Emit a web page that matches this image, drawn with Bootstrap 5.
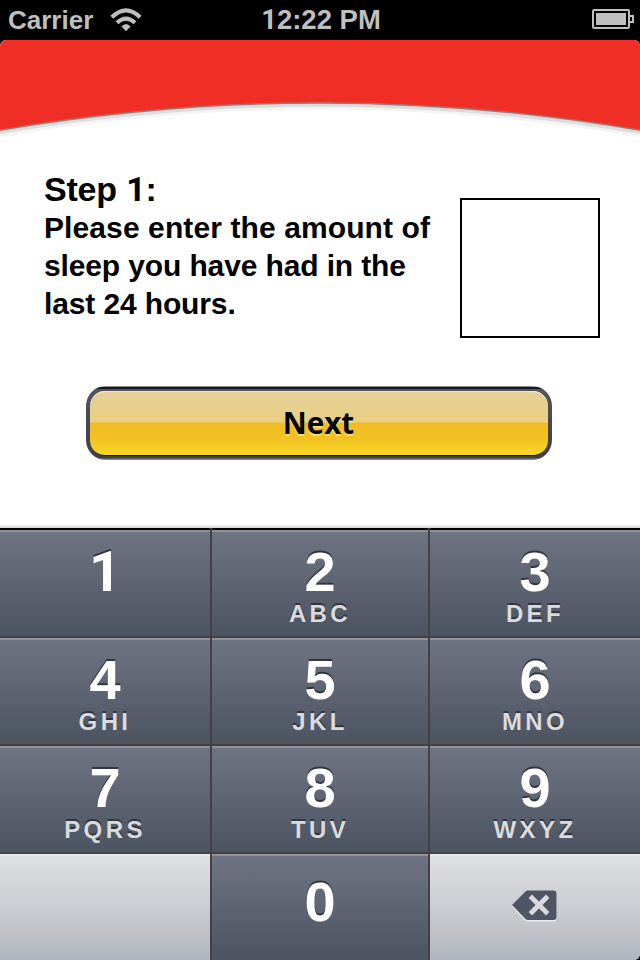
<!DOCTYPE html>
<html lang="en">
<head>
<meta charset="utf-8">
<meta name="viewport" content="width=device-width, initial-scale=1">
<title>Sleep calculator</title>
<link href="https://cdn.jsdelivr.net/npm/bootstrap@5.3.0/dist/css/bootstrap.min.css" rel="stylesheet">
<style>
body { font-family: "Liberation Sans", Arial, sans-serif; background: #000; }
.screen { width: 640px; height: 960px; }
.statusbar { height: 40px; color: #bfbfbf; font-size: 27.5px; line-height: 40px; display: grid; grid-template-columns: 1fr auto 1fr; padding: 0 6px 0 8px; }
.carrier { font-size: 26px; }
.wifi { margin-left: 17px; }
.plain-one { font-family: Roboto, sans-serif; line-height: 1; }
.content-area { height: 488px; border-radius: 6px 6px 0 0; }
.banner { height: 98px; }
.prompt { padding: 32px 40px 0 44px; height: 248px; }
.step-title { font-size: 34px; line-height: 39px; letter-spacing: -.2px; }
.step-text { font-size: 30px; line-height: 38px; letter-spacing: .1px; white-space: nowrap; }
.tight { letter-spacing: -.13px; }
.hours-box { width: 140px; height: 140px; margin-top: 28px; border: 2px solid #000; border-radius: 0; padding: 8px; font-size: 60px; text-align: center; }
.next-frame { width: 466px; height: 74px; margin-left: 86px; padding: 5px 4px 4px; border-radius: 20px; background: linear-gradient(#8c8c90 0 1px, #17191d 1px 3px, #50545c 3px 6px, #454850 50%, #3c4048 calc(100% - 2px), #88868a calc(100% - 1px)); }
.next-btn { border-radius: 15px; border: 0; border-bottom: 1px solid #151515; padding: 0 1px 1px 0; color: #000; font: bold 29.5px/60px "Open Sans", "Noto Sans", sans-serif; text-shadow: 0 1.5px 0 rgba(255,240,190,.6);
  background: linear-gradient(#f1e3bd 0, #e5cf98 2px, #eacf82 31px, #efbc22 32px, #f2c223 48px, #f9d925 100%); box-shadow: inset 0 1px 0 #f3e7ca; }
.next-btn:hover { color: #000; }
.pad-shade { height: 4px; background: linear-gradient(#fff, #d3d3d3); margin-top: auto; }
.keypad { height: 432px; display: grid; grid-template-columns: 212px 218px 210px; grid-template-rows: 110px 108px 108px 106px; }
.pad-key { border: 0 solid #424244; border-width: 0 2px 2px 0; padding: 0; color: #fff; background: linear-gradient(#8f93a0 0 2px, #6e7481 2px, #4d5461 100%) padding-box; text-shadow: 0 -2px 0 #303540; }
.pad-key:nth-child(3n) { border-right-width: 0; }
.pad-key:nth-child(n+10) { border-bottom-width: 0; }
.pad-key:nth-child(-n+3) { padding-top: 2px; background: linear-gradient(#000 0 2px, #8f8f9d 2px 4px, #6e7481 4px, #4d5461 100%) padding-box; }
.pad-key.pale { background: linear-gradient(#e8e9ea 0 2px, #dedfe3 2px, #c3c7cb 65%, #b1b5c0 100%) padding-box; }
.digit { font-size: 56px; line-height: 60px; height: 72px; padding-top: 12px; }
.letters { font-size: 24px; line-height: 24px; letter-spacing: 3.4px; color: #d9dbdd; }
.digit.zero { padding-top: 18px; }
</style>
</head>
<body>
<main class="screen d-flex flex-column overflow-hidden">
  <header class="statusbar align-items-center fw-bold">
    <div class="d-flex align-items-center">
      <span class="carrier">Carrier</span>
      <svg class="wifi" width="32" height="40" viewBox="110 0 32 40" fill="none" stroke="#bfbfbf">
        <path d="M111.900 17.300Q126 3.500 140.100 17.300" stroke-width="4.200"/>
        <path d="M117 22.700Q126 14.500 135 22.700" stroke-width="4"/>
        <path d="M121.400 26.600Q126 21.600 130.600 26.600L126 31.200Z" fill="#bfbfbf" stroke="none"/>
      </svg>
    </div>
    <span><span class="plain-one">1</span>2:22 PM</span>
    <svg class="ms-auto" width="42" height="40" viewBox="592 0 42 40">
      <rect x="593" y="10" width="36" height="18" rx="1.2" fill="none" stroke="#bfbfbf" stroke-width="2"/>
      <path d="M596 13h30v12h-30z" fill="#bfbfbf"/>
      <path d="M630 16h3v6h-3" fill="none" stroke="#bfbfbf" stroke-width="2"/>
    </svg>
  </header>
  <section class="content-area bg-white text-black d-flex flex-column overflow-hidden">
    <svg class="banner d-block flex-shrink-0" width="640" height="98" viewBox="0 40 640 98">
      <g fill="none">
        <path d="M0 134Q320 79 640 134" stroke="#f4f4f4" stroke-width="6"/>
        <path d="M0 132Q320 77.5 640 132" stroke="#dcdcdc" stroke-width="4"/>
      </g>
      <path d="M0 40H640V129.4Q320 75.4 0 129.4Z" fill="#ef2e26"/>
      <path d="M0 129Q320 74.5 640 129" fill="none" stroke="#fa2c23" stroke-width="2"/>
      <path d="M0 130.2Q320 75.7 640 130.2" fill="none" stroke="#9c7672" stroke-width="1.5"/>
    </svg>
    <div class="prompt d-flex justify-content-between fw-bold flex-shrink-0">
      <div>
        <h1 class="step-title fw-bold m-0">Step <span class="plain-one">1</span>:</h1>
        <p class="step-text m-0">Please enter the amount of<br><span class="tight">sleep you have had in the<br>last 24 hours.</span></p>
      </div>
      <input class="hours-box bg-white" type="text" inputmode="numeric" aria-label="Hours of sleep">
    </div>
    <div class="next-frame flex-shrink-0"><button class="btn next-btn w-100 h-100" type="button">Next</button></div>
    <div class="pad-shade"></div>
  </section>
  <section class="keypad fw-bold text-center" aria-label="Keypad">
    <div class="pad-key"><div class="digit plain-one" style="line-height:60px">1</div></div>
    <div class="pad-key"><div class="digit">2</div><div class="letters">ABC</div></div>
    <div class="pad-key"><div class="digit">3</div><div class="letters">DEF</div></div>
    <div class="pad-key"><div class="digit">4</div><div class="letters">GHI</div></div>
    <div class="pad-key"><div class="digit">5</div><div class="letters">JKL</div></div>
    <div class="pad-key"><div class="digit">6</div><div class="letters">MNO</div></div>
    <div class="pad-key"><div class="digit">7</div><div class="letters">PQRS</div></div>
    <div class="pad-key"><div class="digit">8</div><div class="letters">TUV</div></div>
    <div class="pad-key"><div class="digit">9</div><div class="letters">WXYZ</div></div>
    <div class="pad-key pale"></div>
    <div class="pad-key"><div class="digit zero">0</div></div>
    <div class="pad-key pale">
      <svg class="d-block" width="210" height="106" viewBox="430 854 210 106" role="img" aria-label="Delete">
        <path d="M512 906.5L525.5 892.5Q527 891 529 891H553.5Q556.5 891 556.5 894V918Q556.5 921.5 553.5 921.5H528Q526 921.5 524.5 920Z" fill="#e8eaed"/>
        <path d="M512 905L525.5 891.5Q526.5 890.5 528 890.5H553.5Q556.5 890.5 556.5 893.5V917Q556.5 920 553.5 920H528Q526.5 920 525.5 919Z" fill="#4e5563"/>
        <path d="M532 898L546 912M546 898L532 912" stroke="#d8dadd" stroke-width="4.8" stroke-linecap="square"/>
        <path d="M640 955.5V960H635.5Q639 959 640 955.5Z" fill="#000"/>
      </svg>
    </div>
  </section>
</main>
<script src="https://cdn.jsdelivr.net/npm/bootstrap@5.3.0/dist/js/bootstrap.bundle.min.js"></script>
</body>
</html>
